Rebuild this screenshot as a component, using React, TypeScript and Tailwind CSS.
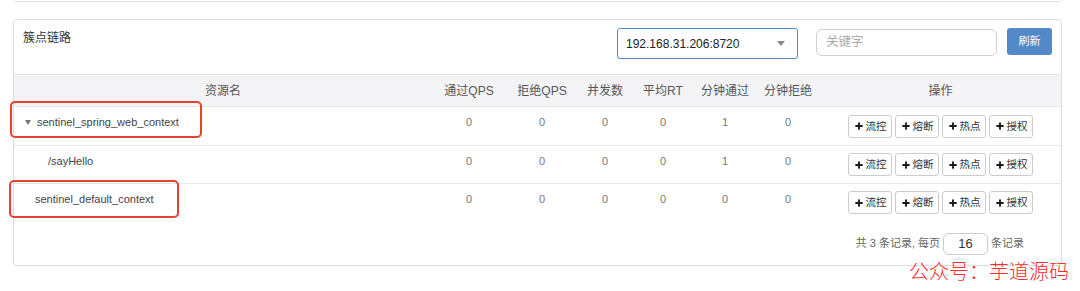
import { Plus } from 'lucide-react';

const FONT = 'font-["Liberation_Sans","Noto_Sans_CJK_SC",sans-serif]';
const COLS = 'grid grid-cols-[418px_74px_72px_54px_62px_62px_64px_1fr]';

interface Row {
  name: string;
  pass: number;
  block: number;
  threads: number;
  rt: number;
  minPass: number;
  minBlock: number;
  kind: 'root' | 'child' | 'plain';
}

const ROWS: Row[] = [
  { name: 'sentinel_spring_web_context', pass: 0, block: 0, threads: 0, rt: 0, minPass: 1, minBlock: 0, kind: 'root' },
  { name: '/sayHello', pass: 0, block: 0, threads: 0, rt: 0, minPass: 1, minBlock: 0, kind: 'child' },
  { name: 'sentinel_default_context', pass: 0, block: 0, threads: 0, rt: 0, minPass: 0, minBlock: 0, kind: 'plain' },
];

const HEADERS = ['资源名', '通过QPS', '拒绝QPS', '并发数', '平均RT', '分钟通过', '分钟拒绝', '操作'];
const ACTIONS = ['流控', '熔断', '热点', '授权'];

function ActionButton({ label }: { label: string }) {
  return (
    <button className="flex h-[23px] w-[44px] items-center justify-center gap-[2px] rounded-[3px] border border-[#cccccc] bg-white text-[10.5px] text-[#333]">
      <Plus size={10} strokeWidth={4.5} color="#1a1a1a" />
      <span>{label}</span>
    </button>
  );
}

export default function App() {
  return (
    <div className={`relative h-[291px] w-[1080px] bg-white pl-[13px] pr-[18px] ${FONT}`}>
      {/* bottom edge of the panel above */}
      <div className="h-[2px] rounded-b-[4px] border-x border-b border-[#e3e3e3]" />

      <div className="mt-[17px] h-[247px] rounded-[4px] border border-[#dddddd] bg-white">
        {/* Title bar */}
        <div className="flex h-[54px] items-start pl-[9px] pr-[9px] pt-[8px]">
          <div className="text-[12px] leading-[20px] text-[#333]">簇点链路</div>
          <div className="ml-auto flex h-[31px] w-[181px] items-center justify-between rounded-[3px] border border-[#5489c9] pl-[8px] pr-[12px] text-[12px] text-[#222]">
            <span>192.168.31.206:8720</span>
            <span className="h-0 w-0 border-x-[4px] border-t-[5px] border-x-transparent border-t-[#888]" />
          </div>
          <div className="ml-[18px] mt-[1px] flex h-[27px] w-[181px] items-center rounded-[6px] border border-[#d0d0d0] pl-[9px] text-[12.5px] text-[#aaaaaa]">
            关键字
          </div>
          <button className="ml-[10px] h-[27px] w-[45px] rounded-[3px] bg-[#5389c8] text-[11px] text-white">刷新</button>
        </div>

        {/* Table header */}
        <div className={`${COLS} h-[33px] items-center border-y border-[#e4e4e4] bg-[#f4f4f6] text-[12px] text-[#555]`}>
          {HEADERS.map(h => (
            <div key={h} className="text-center">{h}</div>
          ))}
        </div>

        {/* Rows */}
        {ROWS.map((r, i) => (
          <div
            key={r.name}
            className={`${COLS} h-[38px] items-stretch text-[11px] leading-[17px] ${i > 0 ? 'border-t border-[#e6e6e6]' : ''}`}
          >
            <div className="relative flex items-start pt-[7px] text-[#444]">
              {r.kind === 'root' && (
                <>
                  <span className="ml-[11px] mr-[6px] mt-[6px] h-0 w-0 border-x-[3.5px] border-t-[5px] border-x-transparent border-t-[#777]" />
                  <span>{r.name}</span>
                  <div className="absolute left-[-4px] top-[-6px] h-[37px] w-[192px] rounded-[5px] border-2 border-[#e5432d]" />
                </>
              )}
              {r.kind === 'child' && <span className="pl-[34px]">{r.name}</span>}
              {r.kind === 'plain' && (
                <>
                  <span className="pl-[21px]">{r.name}</span>
                  <div className="absolute left-[-5px] top-[-4px] h-[38px] w-[170px] rounded-[5px] border-2 border-[#e5432d]" />
                </>
              )}
            </div>
            {[r.pass, r.block, r.threads, r.rt, r.minPass, r.minBlock].map((v, j) => (
              <div key={j} className="pt-[7px] text-center text-[#777]">{v}</div>
            ))}
            <div className="flex items-center justify-center gap-[3px]">
              {ACTIONS.map(a => (
                <ActionButton key={a} label={a} />
              ))}
            </div>
          </div>
        ))}

        {/* Footer */}
        <div className="flex h-[44px] items-center justify-end gap-[3px] border-t border-transparent pr-[37px] text-[11px] text-[#666]">
          <span>共 3 条记录, 每页</span>
          <div className="flex h-[22px] w-[45px] items-center justify-center rounded-[6px] border border-[#cccccc] text-[13px] text-[#333]">
            16
          </div>
          <span>条记录</span>
        </div>
      </div>

      {/* watermark */}
      <div className='absolute left-[909px] top-[257px] font-["Noto_Sans_CJK_SC",sans-serif] text-[20px] font-light leading-[28px] text-[#ff2a2a]'>
        公众号：芋道源码
      </div>
    </div>
  );
}
